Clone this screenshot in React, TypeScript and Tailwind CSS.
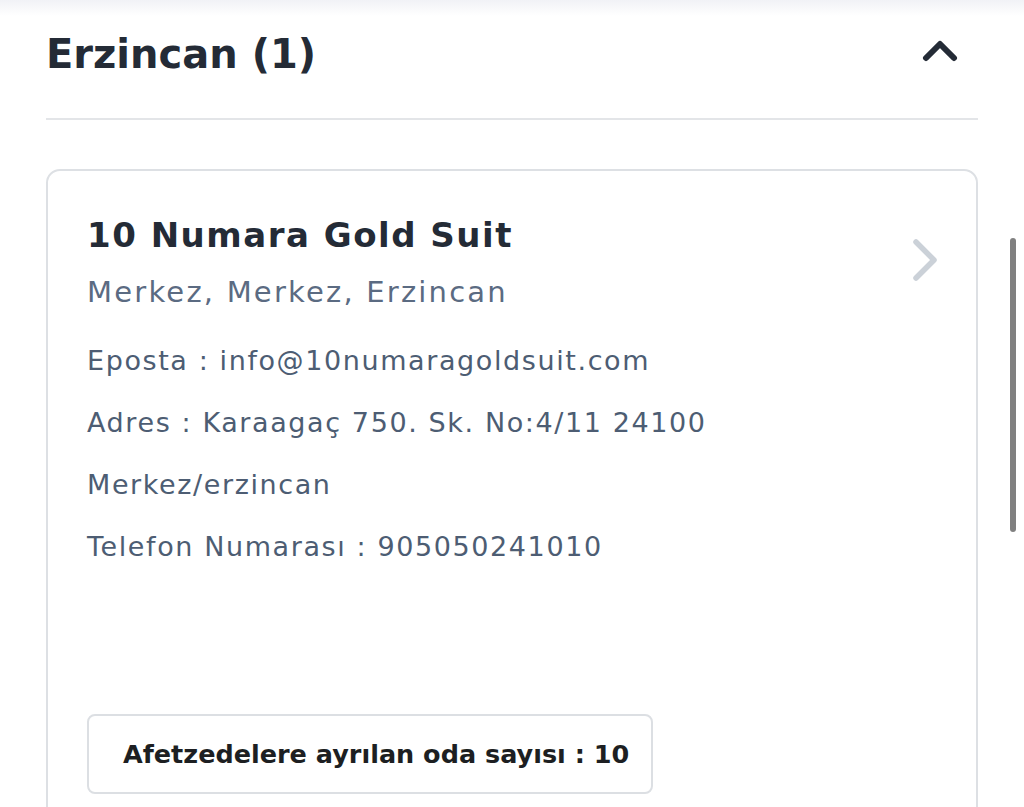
const details = [
  "Eposta : info@10numaragoldsuit.com",
  "Adres : Karaagaç 750. Sk. No:4/11 24100",
  "Merkez/erzincan",
  "Telefon Numarası : 905050241010",
];

function ChevronUp() {
  return (
    <svg width="36" height="26" viewBox="0 0 36 26" fill="none" aria-hidden="true">
      <path d="M4 19 L18 5 L32 19" stroke="#242b36" strokeWidth="6" strokeLinecap="round" strokeLinejoin="round" />
    </svg>
  );
}

function ChevronRight() {
  return (
    <svg width="30" height="48" viewBox="0 0 30 48" fill="none" aria-hidden="true">
      <path d="M6 5 L24 23 L6 41" stroke="#cbd1d8" strokeWidth="5.5" strokeLinecap="round" strokeLinejoin="round" />
    </svg>
  );
}

export default function App() {
  return (
    <div className="relative h-[807px] w-[1024px] overflow-hidden bg-white font-['DejaVu_Sans',sans-serif]">
      <div className="h-4 bg-gradient-to-b from-[#f1f2f6] to-white" />
      <div className="px-[46px]">
        <div className="flex items-center justify-between border-b-2 border-[#e3e5e8] pb-[38px] pt-[12px]">
          <h2 className="text-[40px] font-bold leading-[52px] text-[#242b36]">Erzincan (1)</h2>
          <div className="mb-[4px] mr-[20px]">
            <ChevronUp />
          </div>
        </div>

        <div className="mt-[49px] rounded-[14px] border-2 border-[#dde0e4] bg-white pb-10 pl-[39px] pr-[36px] pt-[42px]">
          <div className="flex items-start justify-between">
            <div>
              <h3 className="text-[34px] font-bold leading-[44px] tracking-[1.5px] text-[#242b36]">10 Numara Gold Suit</h3>
              <p className="mt-[17px] text-[29px] leading-[36px] tracking-[2.2px] text-[#5b6b82]">Merkez, Merkez, Erzincan</p>
            </div>
            <div className="mt-[24px]">
              <ChevronRight />
            </div>
          </div>
          <div className="mt-[20px] flex flex-col">
            {details.map((line) => (
              <p key={line} className="text-[27px] leading-[62px] tracking-[1.6px] text-[#4d5d73]">
                {line}
              </p>
            ))}
          </div>
          <div className="mt-[136px] inline-flex rounded-[8px] border-2 border-[#dcdfe3] py-[20px] pl-[34px] pr-[22px]">
            <span className="text-[25.5px] font-bold leading-[36px] text-[#1d1f22]">Afetzedelere ayrılan oda sayısı : 10</span>
          </div>
        </div>
      </div>
      <div className="absolute right-[8px] top-[238px] h-[294px] w-[6px] rounded-full bg-[#808080]" />
    </div>
  );
}
